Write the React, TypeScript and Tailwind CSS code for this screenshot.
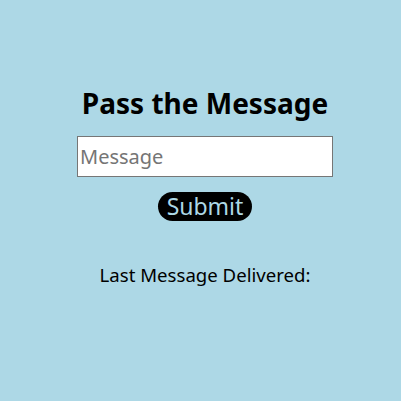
export default function App() {
  return (
    <div className="min-h-[401px] w-full bg-[#add8e6] flex flex-col items-center pt-[84px] pl-[9px] font-['Noto_Sans',sans-serif] text-black">
      <h1 className="text-[28px] font-bold leading-[38px]">Pass the Message</h1>
      <input
        type="text"
        placeholder="Message"
        className="mt-[14px] w-[256px] h-[41px] bg-white border border-[#767676] px-[2px] text-[20px] placeholder:text-[#757575] outline-none"
      />
      <button className="mt-[15px] bg-black text-[#add8e6] rounded-full px-[9px] h-[29px] text-[23px] leading-[29px]">
        Submit
      </button>
      <p className="mt-[42px] text-[18.6px] leading-[24px]">Last Message Delivered:</p>
    </div>
  )
}
